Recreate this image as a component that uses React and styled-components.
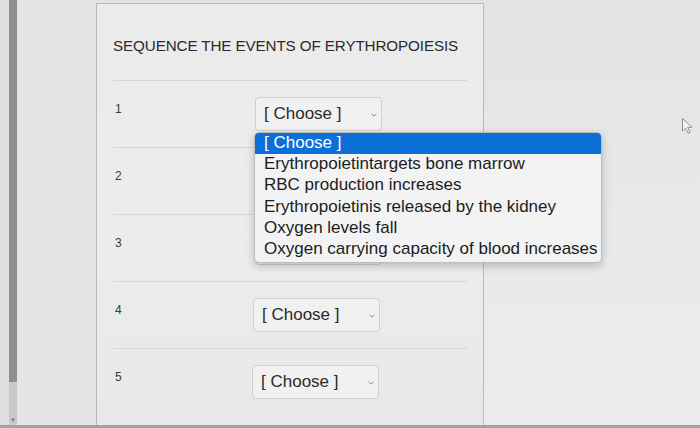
import React from 'react';
import styled, { createGlobalStyle } from 'styled-components';

const Global = createGlobalStyle`
  html, body {
    margin: 0;
    padding: 0;
    width: 700px;
    height: 428px;
    overflow: hidden;
    background: #e4e4e4;
    font-family: "Liberation Sans", Arial, sans-serif;
  }
`;

const Page = styled.div`
  display: flex;
  width: 700px;
  height: 428px;
  background: linear-gradient(180deg, #e2e2e2 0%, #e9e9e9 60%, #e4e4e4 100%);
  border-bottom: 3px solid #a2a2a2;
  box-sizing: border-box;
`;

const Gutter = styled.div`
  width: 9px;
  background: #dedede;
`;

const Scrollbar = styled.div`
  width: 8px;
  display: flex;
  flex-direction: column;
  background: #c9c9c9;
`;

const Thumb = styled.div`
  height: 382px;
  background: #8e8e8e;
`;

const ScrollArrow = styled.div`
  margin-top: auto;
  margin-bottom: 2px;
  font-size: 6px;
  color: #777;
  text-align: center;
`;

const Sidebar = styled.div`
  width: 79px;
  background: #e5e5e5;
`;

const Main = styled.main`
  width: 388px;
  box-sizing: border-box;
  margin-top: 3px;
  padding: 32px 16px 0 16px;
  background: linear-gradient(180deg, #ebebeb 0%, #ececec 60%, #e8e8e8 100%);
  border-top: 1px solid #bdbdbd;
  border-left: 1px solid #b9b9b9;
  border-right: 1px solid #bcbcbc;
`;

const Title = styled.h1`
  margin: 0;
  padding-bottom: 24px;
  font-size: 15.2px;
  line-height: 20px;
  font-weight: 400;
  color: #2a2a2a;
  letter-spacing: -0.1px;
  white-space: nowrap;
  border-bottom: 1px solid #d6d6d6;
`;

const Row = styled.div`
  display: grid;
  grid-template-columns: 142px 1fr;
  height: 66px;
  border-bottom: ${(p) => (p.last ? 'none' : '1px solid #d6d6d6')};
  position: relative;
`;

const Num = styled.div`
  padding: 21px 0 0 2px;
  font-size: 12px;
  color: #3a3a3a;
`;

const SelectBox = styled.div`
  position: relative;
  margin-top: 16px;
  width: 127px;
  height: 34px;
  box-sizing: border-box;
  padding-left: 8px;
  display: flex;
  align-items: center;
  border: 1px solid #cfcfcf;
  border-radius: 4px;
  background: #f1f1f1;
  font-size: 17px;
  color: #2a2a2a;
  margin-left: ${(p) => p.shift || 0}px;
`;

const Chevron = styled.svg`
  position: absolute;
  right: 4px;
  top: 15px;
`;

const Menu = styled.ul`
  position: absolute;
  left: -2px;
  top: 34px;
  z-index: 2;
  margin: 0;
  padding: 0 0 2px 0;
  list-style: none;
  width: 348px;
  box-sizing: border-box;
  background: #f3f3f3;
  border: 1px solid #bdbdbd;
  border-radius: 5px;
  box-shadow: 0 3px 8px rgba(0, 0, 0, 0.22);
  overflow: hidden;
`;

const Option = styled.li`
  height: 21.2px;
  line-height: 20px;
  padding-left: 9px;
  font-size: 17px;
  white-space: nowrap;
  color: ${(p) => (p.active ? '#ffffff' : '#1c1c1c')};
  background: ${(p) => (p.active ? '#0b6fd8' : 'transparent')};
`;

const Right = styled.div`
  flex: 1;
  position: relative;
  background: linear-gradient(180deg, #e3e3e3 0%, #e9e9e9 55%, #ececec 100%);
`;

const Cursor = styled.svg`
  position: absolute;
  left: 197px;
  top: 117px;
`;

const options = [
  '[ Choose ]',
  'Erythropoietintargets bone marrow',
  'RBC production increases',
  'Erythropoietinis released by the kidney',
  'Oxygen levels fall',
  'Oxygen carrying capacity of blood increases',
];

const ChevronIcon = () => (
  <Chevron width="6" height="4" viewBox="0 0 6 4">
    <path d="M0.5 0.8 L3 3.2 L5.5 0.8" fill="none" stroke="#8a8a8a" strokeWidth="1" />
  </Chevron>
);

const Select = ({ open, shift }) => (
  <SelectBox shift={shift}>
    [ Choose ]
    <ChevronIcon />
    {open && (
      <Menu>
        {options.map((o, i) => (
          <Option key={i} active={i === 0}>
            {o}
          </Option>
        ))}
      </Menu>
    )}
  </SelectBox>
);

const App = () => {
  const rows = [1, 2, 3, 4, 5];
  return (
    <>
      <Global />
      <Page>
        <Gutter />
        <Scrollbar>
          <Thumb />
          <ScrollArrow>▼</ScrollArrow>
        </Scrollbar>
        <Sidebar />
        <Main>
          <Title>SEQUENCE THE EVENTS OF ERYTHROPOIESIS</Title>
          {rows.map((n) => (
            <Row key={n} last={n === 5}>
              <Num>{n}</Num>
              <div>
                <Select open={n === 1} shift={n === 5 ? -3 : n === 4 ? -2 : 0} />
              </div>
            </Row>
          ))}
        </Main>
        <Right>
          <Cursor width="14" height="18" viewBox="0 0 14 18">
            <path
              d="M1.5 1.5 L1.5 14 L4.6 11.2 L7 16.2 L9 15.3 L6.7 10.4 L11 10.2 Z"
              fill="#f4f4f4"
              stroke="#8c8c8c"
              strokeWidth="1"
              strokeLinejoin="round"
            />
          </Cursor>
        </Right>
      </Page>
    </>
  );
};

export default App;
